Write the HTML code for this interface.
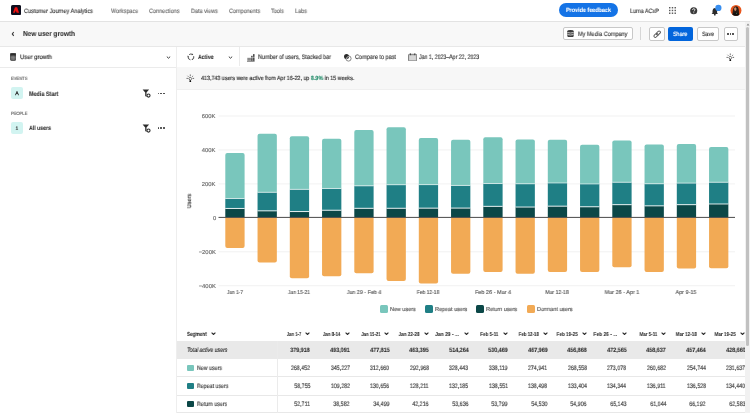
<!DOCTYPE html>
<html><head><meta charset="utf-8"><style>
html,body{margin:0;padding:0;width:750px;height:413px;overflow:hidden;background:#fff;}
body{position:relative;font-family:"Liberation Sans", sans-serif;}
.r{position:absolute;}
.t{position:absolute;white-space:nowrap;font-family:"Liberation Sans", sans-serif;-webkit-text-stroke:0.15px currentColor;will-change:transform;text-rendering:geometricPrecision;}
</style></head><body>
<div class="r" style="left:0px;top:0px;width:750px;height:21px;background:#ffffff;"></div>
<div class="r" style="left:0px;top:20.6px;width:750px;height:1px;background:#e3e3e3;"></div>
<svg class="r" style="left:10.9px;top:5.4px" width="10.1" height="10.1" viewBox="0 0 10 10"><rect width="10" height="10" rx="1.6" fill="#0d0d1d"/><path d="M3.9 2.2H6.1L8 7.8H2z" fill="#f00f0f"/><path d="M3.9 7.9L4.75 5.2 5.6 7.9z" fill="#0d0d1d"/></svg>
<div class="t" style="top:1.70px;line-height:20px;height:20px;font-size:6.283px;color:#3a3a3a;font-weight:400;left:24.00px;transform:scaleX(0.8865);transform-origin:left center;">Customer Journey Analytics</div>
<div class="t" style="top:1.70px;line-height:20px;height:20px;font-size:6.283px;color:#6d6d6d;font-weight:400;left:111.20px;transform:scaleX(0.8754);transform-origin:left center;">Workspace</div>
<div class="t" style="top:1.70px;line-height:20px;height:20px;font-size:6.283px;color:#6d6d6d;font-weight:400;left:149.30px;transform:scaleX(0.8754);transform-origin:left center;">Connections</div>
<div class="t" style="top:1.70px;line-height:20px;height:20px;font-size:6.283px;color:#6d6d6d;font-weight:400;left:190.70px;transform:scaleX(0.8754);transform-origin:left center;">Data views</div>
<div class="t" style="top:1.70px;line-height:20px;height:20px;font-size:6.283px;color:#6d6d6d;font-weight:400;left:228.50px;transform:scaleX(0.8754);transform-origin:left center;">Components</div>
<div class="t" style="top:1.70px;line-height:20px;height:20px;font-size:6.283px;color:#6d6d6d;font-weight:400;left:271.20px;transform:scaleX(0.8754);transform-origin:left center;">Tools</div>
<div class="t" style="top:1.70px;line-height:20px;height:20px;font-size:6.283px;color:#6d6d6d;font-weight:400;left:294.70px;transform:scaleX(0.8754);transform-origin:left center;">Labs</div>
<div class="r" style="left:558.7px;top:3.2px;width:59.1px;height:14px;background:#1473e6;border-radius:7px;"></div>
<div class="t" style="top:1.10px;line-height:20px;height:20px;font-size:6.18px;color:#ffffff;font-weight:700;-webkit-text-stroke:0.07px currentColor;left:566.00px;transform:scaleX(0.8786);transform-origin:left center;">Provide feedback</div>
<div class="t" style="top:1.50px;line-height:20px;height:20px;font-size:6.283px;color:#3a3a3a;font-weight:400;left:630.00px;transform:scaleX(0.8738);transform-origin:left center;">Luma ACxP</div>
<svg class="r" style="left:668.8px;top:6.6px" width="8" height="8" viewBox="0 0 8 8"><rect x="0.00" y="0.00" width="1.45" height="1.45" fill="#5a5a5a"/><rect x="0.00" y="2.75" width="1.45" height="1.45" fill="#5a5a5a"/><rect x="0.00" y="5.50" width="1.45" height="1.45" fill="#5a5a5a"/><rect x="2.75" y="0.00" width="1.45" height="1.45" fill="#5a5a5a"/><rect x="2.75" y="2.75" width="1.45" height="1.45" fill="#5a5a5a"/><rect x="2.75" y="5.50" width="1.45" height="1.45" fill="#5a5a5a"/><rect x="5.50" y="0.00" width="1.45" height="1.45" fill="#5a5a5a"/><rect x="5.50" y="2.75" width="1.45" height="1.45" fill="#5a5a5a"/><rect x="5.50" y="5.50" width="1.45" height="1.45" fill="#5a5a5a"/></svg>
<svg class="r" style="left:690px;top:6.8px" width="8" height="8" viewBox="0 0 8 8"><circle cx="3.7" cy="3.7" r="3.55" fill="#3a3a3a"/><path d="M2.6 2.9q0-1.2 1.15-1.2t1.15 1.1q0 0.55-0.5 0.85t-0.55 0.85" stroke="#fff" stroke-width="0.85" fill="none"/><circle cx="3.8" cy="5.7" r="0.5" fill="#fff"/></svg>
<svg class="r" style="left:710px;top:4px" width="12" height="12" viewBox="0 0 12 12"><path d="M4.8 4.1q-2.2 0.2-2.3 2.6v2.3l-0.9 1h6.4l-0.9-1v-2.3q-0.1-2.4-2.3-2.6z" fill="#2c2c2c"/><circle cx="4.8" cy="10.7" r="0.9" fill="#2c2c2c"/><circle cx="8.4" cy="3.9" r="3.1" fill="#378ef0"/></svg>
<svg class="r" style="left:728px;top:3px" width="16" height="16" viewBox="0 0 16 16"><defs><clipPath id="av"><circle cx="8" cy="7.4" r="5.45"/></clipPath></defs><circle cx="8" cy="7.4" r="5.45" fill="#e9561c"/><g clip-path="url(#av)"><path d="M4.3 13q0.3-7.6 2.2-9.2q1.6-1.2 3.1 0q1.6 1.6 1.6 9.2z" fill="#2a1c17"/><ellipse cx="7.3" cy="6.1" rx="1.2" ry="1.8" fill="#c98f6c"/><path d="M3.6 14q0.6-4.2 4.2-4.4q3.5 0.2 4.2 4.4z" fill="#101010"/><circle cx="8.6" cy="10.3" r="0.5" fill="#6a8a5a"/></g></svg>
<div class="r" style="left:0px;top:21.6px;width:745px;height:25px;background:#f8f8f8;"></div>
<div class="r" style="left:0px;top:46.4px;width:745px;height:0.8px;background:#e8e8e8;"></div>
<svg class="r" style="left:11px;top:31px" width="4" height="6" viewBox="0 0 4 6"><path d="M2.7 1L1.3 2.9l1.4 1.9" stroke="#3a3a3a" stroke-width="1.1" fill="none"/></svg>
<div class="t" style="top:24.10px;line-height:20px;height:20px;font-size:7.21px;color:#2c2c2c;font-weight:700;-webkit-text-stroke:0.07px currentColor;left:23.30px;transform:scaleX(0.8946);transform-origin:left center;">New user growth</div>
<div class="r" style="left:563.4px;top:26.6px;width:69.3px;height:13.6px;background:#ffffff;border:0.8px solid #c8c8c8;border-radius:2px;box-sizing:border-box;"></div>
<svg class="r" style="left:567px;top:29.8px" width="7" height="7.4" viewBox="0 0 7 7.4"><path d="M0.3 1.3Q0.3 0.1 3.5 0.1T6.7 1.3V6.1Q6.7 7.3 3.5 7.3T0.3 6.1z" fill="#3a3a3a"/><path d="M0.5 2.6Q3.5 3.4 6.5 2.6M0.5 4.6Q3.5 5.4 6.5 4.6" stroke="#fff" stroke-width="0.75" fill="none"/></svg>
<div class="t" style="top:24.90px;line-height:20px;height:20px;font-size:6.283px;color:#3a3a3a;font-weight:400;left:578.00px;transform:scaleX(0.8881);transform-origin:left center;">My Media Company</div>
<div class="r" style="left:640px;top:27px;width:0.8px;height:13px;background:#d6d6d6;"></div>
<div class="r" style="left:649.2px;top:26.5px;width:15.4px;height:14.2px;background:#ffffff;border:0.8px solid #c8c8c8;border-radius:2px;box-sizing:border-box;"></div>
<svg class="r" style="left:652.8px;top:29.5px" width="8.4" height="8.4" viewBox="0 0 8.4 8.4"><g transform="rotate(-45 4.2 4.2)" stroke="#5a5a5a" stroke-width="0.95" fill="none"><rect x="0.2" y="2.9" width="4.6" height="2.6" rx="1.3"/><rect x="3.6" y="2.9" width="4.6" height="2.6" rx="1.3"/></g></svg>
<div class="r" style="left:667.9px;top:26.5px;width:25.2px;height:14px;background:#0265dc;border-radius:2px;"></div>
<div class="t" style="top:24.70px;line-height:20px;height:20px;font-size:6.18px;color:#ffffff;font-weight:400;left:673.20px;transform:scaleX(0.8738);transform-origin:left center;">Share</div>
<div class="r" style="left:696.7px;top:26.5px;width:22.8px;height:14px;background:#ffffff;border:0.8px solid #c8c8c8;border-radius:2px;box-sizing:border-box;"></div>
<div class="t" style="top:24.70px;line-height:20px;height:20px;font-size:6.18px;color:#3a3a3a;font-weight:400;left:702.00px;transform:scaleX(0.8511);transform-origin:left center;">Save</div>
<div class="r" style="left:723.5px;top:26.5px;width:14px;height:14px;background:#ffffff;border:0.8px solid #c8c8c8;border-radius:2px;box-sizing:border-box;"></div>
<div class="r" style="left:726.9px;top:33.1px;width:1.8px;height:1.8px;background:#555555;"></div>
<div class="r" style="left:729.55px;top:33.1px;width:1.8px;height:1.8px;background:#555555;"></div>
<div class="r" style="left:732.1999999999999px;top:33.1px;width:1.8px;height:1.8px;background:#555555;"></div>
<div class="r" style="left:0px;top:47.1px;width:176px;height:366px;background:#ffffff;"></div>
<div class="r" style="left:175.7px;top:47.1px;width:0.8px;height:366px;background:#eeeeee;"></div>
<div class="r" style="left:0px;top:66.6px;width:176px;height:0.8px;background:#ebebeb;"></div>
<svg class="r" style="left:9.7px;top:53.2px" width="6.2" height="7.8" viewBox="0 0 6.2 7.8"><rect x="0.4" y="0.4" width="5.4" height="7" rx="1" stroke="#3a3a3a" stroke-width="0.8" fill="#6a6a6a"/><rect x="0.4" y="0.4" width="5.4" height="2.2" fill="#2c2c2c"/><path d="M0.6 4.8h5M3.1 2.6v4.8" stroke="#999" stroke-width="0.5"/></svg>
<div class="t" style="top:48.20px;line-height:20px;height:20px;font-size:6.283px;color:#2c2c2c;font-weight:400;left:19.80px;transform:scaleX(0.9454);transform-origin:left center;">User growth</div>
<svg class="r" style="left:166.1px;top:56.2px" width="5" height="3" viewBox="0 0 5 3"><path d="M0.8 0.6L2.5 2.2 4.2 0.6" stroke="#3a3a3a" stroke-width="1.0" fill="none"/></svg>
<div class="t" style="top:70.10px;line-height:20px;height:20px;font-size:4.738px;color:#505050;font-weight:400;left:10.70px;transform:scaleX(0.8653);transform-origin:left center;-webkit-text-stroke:0.1px #505050;">EVENTS</div>
<div class="r" style="left:10.6px;top:87.1px;width:12.1px;height:12.1px;background:#d2f4f1;border-radius:2px;"></div>
<div class="t" style="top:84.30px;line-height:20px;height:20px;font-size:5.2px;color:#2c2c2c;font-weight:400;left:-83.40px;width:200px;text-align:center;-webkit-text-stroke:0.3px #2c2c2c;">A</div>
<div class="t" style="top:84.60px;line-height:20px;height:20px;font-size:6.386px;color:#2c2c2c;font-weight:700;-webkit-text-stroke:0.07px currentColor;left:28.50px;transform:scaleX(0.8566);transform-origin:left center;">Media Start</div>
<div class="t" style="top:104.60px;line-height:20px;height:20px;font-size:4.738px;color:#505050;font-weight:400;left:10.70px;transform:scaleX(0.8653);transform-origin:left center;-webkit-text-stroke:0.1px #505050;">PEOPLE</div>
<div class="r" style="left:10.6px;top:121.8px;width:12.1px;height:12.1px;background:#d2f4f1;border-radius:2px;"></div>
<div class="t" style="top:118.80px;line-height:20px;height:20px;font-size:5.0px;color:#2c2c2c;font-weight:400;left:-83.40px;width:200px;text-align:center;">1</div>
<div class="t" style="top:119.20px;line-height:20px;height:20px;font-size:6.283px;color:#2c2c2c;font-weight:700;-webkit-text-stroke:0.07px currentColor;left:28.50px;transform:scaleX(0.8292);transform-origin:left center;">All users</div>
<svg class="r" style="left:142px;top:89.40px" width="10" height="10" viewBox="0 0 10 10"><path d="M0.6 0.6H7.1L4.5 3.5V7.9L3.2 7V3.5z" fill="#2c2c2c"/><circle cx="6.5" cy="6.6" r="1.55" stroke="#2c2c2c" stroke-width="1.1" fill="#fff"/></svg>
<div class="r" style="left:157.7px;top:92.9px;width:1.6px;height:1.6px;background:#3a3a3a;border-radius:50%;"></div>
<div class="r" style="left:160.39999999999998px;top:92.9px;width:1.6px;height:1.6px;background:#3a3a3a;border-radius:50%;"></div>
<div class="r" style="left:163.1px;top:92.9px;width:1.6px;height:1.6px;background:#3a3a3a;border-radius:50%;"></div>
<svg class="r" style="left:142px;top:123.90px" width="10" height="10" viewBox="0 0 10 10"><path d="M0.6 0.6H7.1L4.5 3.5V7.9L3.2 7V3.5z" fill="#2c2c2c"/><circle cx="6.5" cy="6.6" r="1.55" stroke="#2c2c2c" stroke-width="1.1" fill="#fff"/></svg>
<div class="r" style="left:157.7px;top:127.39999999999999px;width:1.6px;height:1.6px;background:#3a3a3a;border-radius:50%;"></div>
<div class="r" style="left:160.39999999999998px;top:127.39999999999999px;width:1.6px;height:1.6px;background:#3a3a3a;border-radius:50%;"></div>
<div class="r" style="left:163.1px;top:127.39999999999999px;width:1.6px;height:1.6px;background:#3a3a3a;border-radius:50%;"></div>
<div class="r" style="left:176.8px;top:47.1px;width:568.2px;height:19.5px;background:#ffffff;"></div>
<div class="r" style="left:176.8px;top:66.6px;width:568.2px;height:0.8px;background:#ebebeb;"></div>
<div class="r" style="left:239px;top:47.1px;width:0.8px;height:19.3px;background:#ebebeb;"></div>
<svg class="r" style="left:186.8px;top:53.2px" width="8" height="8" viewBox="0 0 8 8"><g stroke="#3a3a3a" stroke-width="0.9" fill="none"><path d="M2.2 1.6A2.9 2.9 0 0 1 5.4 1.4"/><path d="M6.7 3.2A2.9 2.9 0 0 1 5.3 6.6"/><path d="M3.4 6.8A2.9 2.9 0 0 1 1.1 3.6"/></g><path d="M5 0.6l1.3 1.1-1.5 0.6zM6.4 6.3l-1.6 0.7 0.2-1.6zM0.6 4.2l0.1-1.7 1.3 1z" fill="#3a3a3a"/></svg>
<div class="t" style="top:48.20px;line-height:20px;height:20px;font-size:6.283px;color:#2c2c2c;font-weight:700;-webkit-text-stroke:0.07px currentColor;left:198.00px;transform:scaleX(0.8276);transform-origin:left center;">Active</div>
<svg class="r" style="left:227.8px;top:56px" width="5" height="3" viewBox="0 0 5 3"><path d="M0.8 0.6L2.5 2.2 4.2 0.6" stroke="#3a3a3a" stroke-width="1.0" fill="none"/></svg>
<svg class="r" style="left:246.8px;top:53.5px" width="8" height="8" viewBox="0 0 8 8"><rect x="0" y="6.9" width="7.6" height="0.7" fill="#555"/><rect x="0.3" y="3.8" width="3.6" height="3" fill="#8a8a8a"/><rect x="4.2" y="1.8" width="1.4" height="1.8" fill="#3a3a3a"/><rect x="4.2" y="4.1" width="1.4" height="2.8" fill="#3a3a3a"/><rect x="6.1" y="0.1" width="1.4" height="2.8" fill="#3a3a3a"/><rect x="6.1" y="3.4" width="1.4" height="3.5" fill="#3a3a3a"/></svg>
<div class="t" style="top:48.10px;line-height:20px;height:20px;font-size:6.386px;color:#3a3a3a;font-weight:400;left:258.00px;transform:scaleX(0.8613);transform-origin:left center;">Number of users, Stacked bar</div>
<svg class="r" style="left:343px;top:53px" width="9" height="9" viewBox="0 0 9 9"><circle cx="5.5" cy="5.5" r="2.6" stroke="#6a6a6a" stroke-width="0.8" fill="none"/><circle cx="3.5" cy="3.5" r="2.5" fill="#2c2c2c"/><path d="M3.4 6A2.6 2.6 0 0 1 6 3.4" stroke="#fff" stroke-width="0.6" fill="none"/></svg>
<div class="t" style="top:48.10px;line-height:20px;height:20px;font-size:6.386px;color:#3a3a3a;font-weight:400;left:354.50px;transform:scaleX(0.8722);transform-origin:left center;">Compare to past</div>
<svg class="r" style="left:407.6px;top:52.8px" width="9.2" height="8.6" viewBox="0 0 9.2 8.6"><rect x="0.5" y="1.3" width="8.2" height="6.8" rx="0.8" stroke="#6a6a6a" stroke-width="0.8" fill="#c4c4c4"/><rect x="1.5" y="3" width="6.2" height="4" fill="#d6d6d6"/><path d="M2.4 0.4v1.8M6.8 0.4v1.8" stroke="#3a3a3a" stroke-width="1"/></svg>
<div class="t" style="top:48.10px;line-height:20px;height:20px;font-size:6.386px;color:#3a3a3a;font-weight:400;left:419.00px;transform:scaleX(0.8205);transform-origin:left center;">Jan 1, 2023–Apr 22, 2023</div>
<svg class="r" style="left:724.4px;top:50.6px" width="14" height="14" viewBox="0 0 14 14"><path d="M6.3 2.5v1.4M3.5 3.8l0.9 0.9M9.1 3.8l-0.9 0.9M2.5 6.4h1.4M8.7 6.4h1.4" stroke="#3a3a3a" stroke-width="0.75" fill="none"/><path d="M6.3 4.9l1.5 1.8-1.5 1.9-1.5-1.9z" stroke="#3a3a3a" stroke-width="0.75" fill="none"/><circle cx="6.3" cy="9.2" r="0.9" fill="#111"/></svg>
<div class="r" style="left:176.5px;top:67.3px;width:568.2px;height:22.2px;background:#f7f7f7;"></div>
<div class="r" style="left:176.5px;top:88.5px;width:568.2px;height:1.0px;background:#efefef;"></div>
<svg class="r" style="left:184px;top:72px" width="14" height="14" viewBox="0 0 14 14"><path d="M6.3 2.5v1.4M3.5 3.8l0.9 0.9M9.1 3.8l-0.9 0.9M2.5 6.4h1.4M8.7 6.4h1.4" stroke="#3a3a3a" stroke-width="0.75" fill="none"/><path d="M6.3 4.9l1.5 1.8-1.5 1.9-1.5-1.9z" stroke="#3a3a3a" stroke-width="0.75" fill="none"/><circle cx="6.3" cy="9.2" r="0.9" fill="#111"/></svg>
<div class="t" style="left:201.1px;top:69.3px;line-height:20px;height:20px;font-size:6.0px;color:#2c2c2c;transform:scaleX(0.893);transform-origin:left center;">413,743 users were active from Apr 16-22, up <b style="color:#268e6c">8.9%</b> in 15 weeks.</div>
<div class="r" style="left:176.8px;top:89.5px;width:568.2px;height:323.5px;background:#ffffff;"></div>
<svg class="r" style="left:0;top:0" width="750" height="413" viewBox="0 0 750 413"><rect x="218.5" y="115.55" width="516.5" height="0.9" fill="#f0f0f0"/><rect x="218.5" y="149.50" width="516.5" height="0.9" fill="#f0f0f0"/><rect x="218.5" y="183.45" width="516.5" height="0.9" fill="#f0f0f0"/><rect x="218.5" y="251.35" width="516.5" height="0.9" fill="#f0f0f0"/><rect x="218.5" y="285.30" width="516.5" height="0.9" fill="#f0f0f0"/><rect x="225.30" y="208.45" width="19.3" height="8.95" fill="#0b4747"/><rect x="225.30" y="198.48" width="19.3" height="9.97" fill="#1f7f85"/><path d="M225.30 198.48V154.91q0-2 2-2h15.30q2 0 2 2V198.48z" fill="#79c6bc"/><rect x="225.30" y="207.95" width="19.3" height="1" fill="#ffffff" opacity="0.85"/><rect x="225.30" y="197.98" width="19.3" height="1" fill="#ffffff" opacity="0.6"/><path d="M225.30 217.40V245.96q0 2 2 2h15.30q2 0 2-2V217.40z" fill="#f2aa55"/><rect x="257.55" y="210.85" width="19.3" height="6.55" fill="#0b4747"/><rect x="257.55" y="192.30" width="19.3" height="18.55" fill="#1f7f85"/><path d="M257.55 192.30V135.70q0-2 2-2h15.30q2 0 2 2V192.30z" fill="#79c6bc"/><rect x="257.55" y="210.35" width="19.3" height="1" fill="#ffffff" opacity="0.85"/><rect x="257.55" y="191.80" width="19.3" height="1" fill="#ffffff" opacity="0.6"/><path d="M257.55 217.40V260.55q0 2 2 2h15.30q2 0 2-2V217.40z" fill="#f2aa55"/><rect x="289.80" y="211.54" width="19.3" height="5.86" fill="#0b4747"/><rect x="289.80" y="189.36" width="19.3" height="22.18" fill="#1f7f85"/><path d="M289.80 189.36V138.29q0-2 2-2h15.30q2 0 2 2V189.36z" fill="#79c6bc"/><rect x="289.80" y="211.04" width="19.3" height="1" fill="#ffffff" opacity="0.85"/><rect x="289.80" y="188.86" width="19.3" height="1" fill="#ffffff" opacity="0.6"/><path d="M289.80 217.40V276.34q0 2 2 2h15.30q2 0 2-2V217.40z" fill="#f2aa55"/><rect x="322.05" y="210.23" width="19.3" height="7.17" fill="#0b4747"/><rect x="322.05" y="188.47" width="19.3" height="21.76" fill="#1f7f85"/><path d="M322.05 188.47V140.74q0-2 2-2h15.30q2 0 2 2V188.47z" fill="#79c6bc"/><rect x="322.05" y="209.73" width="19.3" height="1" fill="#ffffff" opacity="0.85"/><rect x="322.05" y="187.97" width="19.3" height="1" fill="#ffffff" opacity="0.6"/><path d="M322.05 217.40V274.13q0 2 2 2h15.30q2 0 2-2V217.40z" fill="#f2aa55"/><rect x="354.30" y="208.30" width="19.3" height="9.10" fill="#0b4747"/><rect x="354.30" y="185.86" width="19.3" height="22.44" fill="#1f7f85"/><path d="M354.30 185.86V132.10q0-2 2-2h15.30q2 0 2 2V185.86z" fill="#79c6bc"/><rect x="354.30" y="207.80" width="19.3" height="1" fill="#ffffff" opacity="0.85"/><rect x="354.30" y="185.36" width="19.3" height="1" fill="#ffffff" opacity="0.6"/><path d="M354.30 217.40V271.25q0 2 2 2h15.30q2 0 2-2V217.40z" fill="#f2aa55"/><rect x="386.55" y="208.27" width="19.3" height="9.13" fill="#0b4747"/><rect x="386.55" y="184.75" width="19.3" height="23.52" fill="#1f7f85"/><path d="M386.55 184.75V129.35q0-2 2-2h15.30q2 0 2 2V184.75z" fill="#79c6bc"/><rect x="386.55" y="207.77" width="19.3" height="1" fill="#ffffff" opacity="0.85"/><rect x="386.55" y="184.25" width="19.3" height="1" fill="#ffffff" opacity="0.6"/><path d="M386.55 217.40V278.89q0 2 2 2h15.30q2 0 2-2V217.40z" fill="#f2aa55"/><rect x="418.80" y="208.14" width="19.3" height="9.26" fill="#0b4747"/><rect x="418.80" y="184.63" width="19.3" height="23.51" fill="#1f7f85"/><path d="M418.80 184.63V139.96q0-2 2-2h15.30q2 0 2 2V184.63z" fill="#79c6bc"/><rect x="418.80" y="207.64" width="19.3" height="1" fill="#ffffff" opacity="0.85"/><rect x="418.80" y="184.13" width="19.3" height="1" fill="#ffffff" opacity="0.6"/><path d="M418.80 217.40V281.60q0 2 2 2h15.30q2 0 2-2V217.40z" fill="#f2aa55"/><rect x="451.05" y="208.08" width="19.3" height="9.32" fill="#0b4747"/><rect x="451.05" y="185.43" width="19.3" height="22.65" fill="#1f7f85"/><path d="M451.05 185.43V141.85q0-2 2-2h15.30q2 0 2 2V185.43z" fill="#79c6bc"/><rect x="451.05" y="207.58" width="19.3" height="1" fill="#ffffff" opacity="0.85"/><rect x="451.05" y="184.93" width="19.3" height="1" fill="#ffffff" opacity="0.6"/><path d="M451.05 217.40V271.76q0 2 2 2h15.30q2 0 2-2V217.40z" fill="#f2aa55"/><rect x="483.30" y="206.34" width="19.3" height="11.06" fill="#0b4747"/><rect x="483.30" y="183.54" width="19.3" height="22.80" fill="#1f7f85"/><path d="M483.30 183.54V139.18q0-2 2-2h15.30q2 0 2 2V183.54z" fill="#79c6bc"/><rect x="483.30" y="205.84" width="19.3" height="1" fill="#ffffff" opacity="0.85"/><rect x="483.30" y="183.04" width="19.3" height="1" fill="#ffffff" opacity="0.6"/><path d="M483.30 217.40V269.89q0 2 2 2h15.30q2 0 2-2V217.40z" fill="#f2aa55"/><rect x="515.55" y="207.04" width="19.3" height="10.36" fill="#0b4747"/><rect x="515.55" y="183.80" width="19.3" height="23.24" fill="#1f7f85"/><path d="M515.55 183.80V141.55q0-2 2-2h15.30q2 0 2 2V183.80z" fill="#79c6bc"/><rect x="515.55" y="206.54" width="19.3" height="1" fill="#ffffff" opacity="0.85"/><rect x="515.55" y="183.30" width="19.3" height="1" fill="#ffffff" opacity="0.6"/><path d="M515.55 217.40V271.76q0 2 2 2h15.30q2 0 2-2V217.40z" fill="#f2aa55"/><rect x="547.80" y="206.16" width="19.3" height="11.24" fill="#0b4747"/><rect x="547.80" y="182.99" width="19.3" height="23.18" fill="#1f7f85"/><path d="M547.80 182.99V141.75q0-2 2-2h15.30q2 0 2 2V182.99z" fill="#79c6bc"/><rect x="547.80" y="205.66" width="19.3" height="1" fill="#ffffff" opacity="0.85"/><rect x="547.80" y="182.49" width="19.3" height="1" fill="#ffffff" opacity="0.6"/><path d="M547.80 217.40V269.89q0 2 2 2h15.30q2 0 2-2V217.40z" fill="#f2aa55"/><rect x="580.05" y="206.78" width="19.3" height="10.62" fill="#0b4747"/><rect x="580.05" y="183.96" width="19.3" height="22.82" fill="#1f7f85"/><path d="M580.05 183.96V146.63q0-2 2-2h15.30q2 0 2 2V183.96z" fill="#79c6bc"/><rect x="580.05" y="206.28" width="19.3" height="1" fill="#ffffff" opacity="0.85"/><rect x="580.05" y="183.46" width="19.3" height="1" fill="#ffffff" opacity="0.6"/><path d="M580.05 217.40V269.89q0 2 2 2h15.30q2 0 2-2V217.40z" fill="#f2aa55"/><rect x="612.30" y="204.67" width="19.3" height="12.73" fill="#0b4747"/><rect x="612.30" y="182.26" width="19.3" height="22.41" fill="#1f7f85"/><path d="M612.30 182.26V142.50q0-2 2-2h15.30q2 0 2 2V182.26z" fill="#79c6bc"/><rect x="612.30" y="204.17" width="19.3" height="1" fill="#ffffff" opacity="0.85"/><rect x="612.30" y="181.76" width="19.3" height="1" fill="#ffffff" opacity="0.6"/><path d="M612.30 217.40V265.31q0 2 2 2h15.30q2 0 2-2V217.40z" fill="#f2aa55"/><rect x="644.55" y="205.86" width="19.3" height="11.54" fill="#0b4747"/><rect x="644.55" y="183.79" width="19.3" height="22.07" fill="#1f7f85"/><path d="M644.55 183.79V146.58q0-2 2-2h15.30q2 0 2 2V183.79z" fill="#79c6bc"/><rect x="644.55" y="205.36" width="19.3" height="1" fill="#ffffff" opacity="0.85"/><rect x="644.55" y="183.29" width="19.3" height="1" fill="#ffffff" opacity="0.6"/><path d="M644.55 217.40V269.89q0 2 2 2h15.30q2 0 2-2V217.40z" fill="#f2aa55"/><rect x="676.80" y="204.67" width="19.3" height="12.73" fill="#0b4747"/><rect x="676.80" y="183.11" width="19.3" height="21.56" fill="#1f7f85"/><path d="M676.80 183.11V145.90q0-2 2-2h15.30q2 0 2 2V183.11z" fill="#79c6bc"/><rect x="676.80" y="204.17" width="19.3" height="1" fill="#ffffff" opacity="0.85"/><rect x="676.80" y="182.61" width="19.3" height="1" fill="#ffffff" opacity="0.6"/><path d="M676.80 217.40V266.49q0 2 2 2h15.30q2 0 2-2V217.40z" fill="#f2aa55"/><rect x="709.05" y="203.99" width="19.3" height="13.41" fill="#0b4747"/><rect x="709.05" y="182.26" width="19.3" height="21.73" fill="#1f7f85"/><path d="M709.05 182.26V148.95q0-2 2-2h15.30q2 0 2 2V182.26z" fill="#79c6bc"/><rect x="709.05" y="203.49" width="19.3" height="1" fill="#ffffff" opacity="0.85"/><rect x="709.05" y="181.76" width="19.3" height="1" fill="#ffffff" opacity="0.6"/><path d="M709.05 217.40V266.16q0 2 2 2h15.30q2 0 2-2V217.40z" fill="#f2aa55"/><rect x="218.5" y="216.90" width="516.5" height="1" fill="#4b4b4b"/></svg>
<div class="t" style="top:107.25px;line-height:20px;height:20px;font-size:5.768px;color:#6a6a6a;font-weight:400;right:534.30px;text-align:right;transform:scaleX(1.0177);transform-origin:right center;">600K</div>
<div class="t" style="top:141.20px;line-height:20px;height:20px;font-size:5.768px;color:#6a6a6a;font-weight:400;right:534.30px;text-align:right;transform:scaleX(1.0177);transform-origin:right center;">400K</div>
<div class="t" style="top:175.15px;line-height:20px;height:20px;font-size:5.768px;color:#6a6a6a;font-weight:400;right:534.30px;text-align:right;transform:scaleX(1.0177);transform-origin:right center;">200K</div>
<div class="t" style="top:209.10px;line-height:20px;height:20px;font-size:5.768px;color:#6a6a6a;font-weight:400;right:534.30px;text-align:right;transform:scaleX(1.0177);transform-origin:right center;">0</div>
<div class="t" style="top:243.05px;line-height:20px;height:20px;font-size:5.768px;color:#6a6a6a;font-weight:400;right:534.30px;text-align:right;transform:scaleX(1.0177);transform-origin:right center;">&minus;200K</div>
<div class="t" style="top:277.00px;line-height:20px;height:20px;font-size:5.768px;color:#6a6a6a;font-weight:400;right:534.30px;text-align:right;transform:scaleX(1.0177);transform-origin:right center;">&minus;400K</div>
<div class="t" style="top:190.60px;line-height:20px;height:20px;font-size:5.9px;color:#333333;font-weight:400;left:90.20px;width:200px;text-align:center;transform:rotate(-90deg) scaleX(0.922);">Users</div>
<div class="t" style="top:282.70px;line-height:20px;height:20px;font-size:5.6px;color:#606060;font-weight:400;left:134.95px;width:200px;text-align:center;transform:scaleX(0.8619);transform-origin:center center;">Jan 1-7</div>
<div class="t" style="top:282.70px;line-height:20px;height:20px;font-size:5.6px;color:#606060;font-weight:400;left:199.45px;width:200px;text-align:center;transform:scaleX(0.8752);transform-origin:center center;">Jan 15-21</div>
<div class="t" style="top:282.70px;line-height:20px;height:20px;font-size:5.6px;color:#606060;font-weight:400;left:263.95px;width:200px;text-align:center;transform:scaleX(0.9582);transform-origin:center center;">Jan 29 - Feb 4</div>
<div class="t" style="top:282.70px;line-height:20px;height:20px;font-size:5.6px;color:#606060;font-weight:400;left:328.45px;width:200px;text-align:center;transform:scaleX(0.8775);transform-origin:center center;">Feb 12-18</div>
<div class="t" style="top:282.70px;line-height:20px;height:20px;font-size:5.6px;color:#606060;font-weight:400;left:392.95px;width:200px;text-align:center;transform:scaleX(0.9857);transform-origin:center center;">Feb 26 - Mar 4</div>
<div class="t" style="top:282.70px;line-height:20px;height:20px;font-size:5.6px;color:#606060;font-weight:400;left:457.45px;width:200px;text-align:center;transform:scaleX(0.9168);transform-origin:center center;">Mar 12-18</div>
<div class="t" style="top:282.70px;line-height:20px;height:20px;font-size:5.6px;color:#606060;font-weight:400;left:521.95px;width:200px;text-align:center;transform:scaleX(0.9752);transform-origin:center center;">Mar 26 - Apr 1</div>
<div class="t" style="top:282.70px;line-height:20px;height:20px;font-size:5.6px;color:#606060;font-weight:400;left:586.45px;width:200px;text-align:center;transform:scaleX(0.9684);transform-origin:center center;">Apr 9-15</div>
<div class="r" style="left:380px;top:305.3px;width:7.8px;height:7.8px;background:#79c6bc;border-radius:1.5px;"></div>
<div class="t" style="top:300.20px;line-height:20px;height:20px;font-size:5.768px;color:#585858;font-weight:400;left:390.00px;transform:scaleX(0.9431);transform-origin:left center;">New users</div>
<div class="r" style="left:425.4px;top:305.3px;width:7.8px;height:7.8px;background:#1f7f85;border-radius:1.5px;"></div>
<div class="t" style="top:300.20px;line-height:20px;height:20px;font-size:5.768px;color:#585858;font-weight:400;left:435.40px;transform:scaleX(0.9431);transform-origin:left center;">Repeat users</div>
<div class="r" style="left:476.4px;top:305.3px;width:7.8px;height:7.8px;background:#0b4747;border-radius:1.5px;"></div>
<div class="t" style="top:300.20px;line-height:20px;height:20px;font-size:5.768px;color:#585858;font-weight:400;left:486.40px;transform:scaleX(0.9431);transform-origin:left center;">Return users</div>
<div class="r" style="left:527.1px;top:305.3px;width:7.8px;height:7.8px;background:#f2aa55;border-radius:1.5px;"></div>
<div class="t" style="top:300.20px;line-height:20px;height:20px;font-size:5.768px;color:#585858;font-weight:400;left:537.10px;transform:scaleX(0.9431);transform-origin:left center;">Dormant users</div>
<div class="t" style="top:324.60px;line-height:20px;height:20px;font-size:5.974px;color:#2c2c2c;font-weight:700;-webkit-text-stroke:0.07px currentColor;left:186.70px;transform:scaleX(0.7800);transform-origin:left center;">Segment</div>
<svg class="r" style="left:211px;top:331.7px" width="5" height="3.4" viewBox="0 0 5 3.4"><path d="M0.6 0.7L2.5 2.5 4.4 0.7" stroke="#2c2c2c" stroke-width="1.15" fill="none"/></svg>
<div class="r" style="left:176.8px;top:340.7px;width:568.2px;height:18px;background:#e9e9e9;"></div>
<div class="r" style="left:176.8px;top:376.2px;width:568.2px;height:0.8px;background:#e8e8e8;"></div>
<div class="r" style="left:176.8px;top:394.7px;width:568.2px;height:0.8px;background:#e8e8e8;"></div>
<div class="r" style="left:176.8px;top:411.8px;width:568.2px;height:0.8px;background:#e8e8e8;"></div>
<div class="r" style="left:277.2px;top:340.7px;width:0.8px;height:73px;background:#ebebeb;"></div>
<svg class="r" style="left:305.3px;top:331.7px" width="5" height="3.4" viewBox="0 0 5 3.4"><path d="M0.6 0.7L2.5 2.5 4.4 0.7" stroke="#2c2c2c" stroke-width="1.15" fill="none"/></svg>
<div class="t" style="top:324.60px;line-height:20px;height:20px;font-size:5.6px;color:#2c2c2c;font-weight:700;-webkit-text-stroke:0.07px currentColor;right:448.90px;text-align:right;transform:scaleX(0.7513);transform-origin:right center;">Jan 1-7</div>
<div class="t" style="top:341.10px;line-height:20px;height:20px;font-size:6.283px;color:#2c2c2c;font-weight:700;-webkit-text-stroke:0.07px currentColor;right:439.90px;text-align:right;transform:scaleX(0.8595);transform-origin:right center;">379,918</div>
<div class="t" style="top:359.30px;line-height:20px;height:20px;font-size:6.386px;color:#3a3a3a;font-weight:400;right:439.90px;text-align:right;transform:scaleX(0.8299);transform-origin:right center;">268,452</div>
<div class="t" style="top:377.30px;line-height:20px;height:20px;font-size:6.386px;color:#3a3a3a;font-weight:400;right:439.90px;text-align:right;transform:scaleX(0.8299);transform-origin:right center;">58,755</div>
<div class="t" style="top:395.30px;line-height:20px;height:20px;font-size:6.386px;color:#3a3a3a;font-weight:400;right:439.90px;text-align:right;transform:scaleX(0.8299);transform-origin:right center;">52,711</div>
<svg class="r" style="left:344.85px;top:331.7px" width="5" height="3.4" viewBox="0 0 5 3.4"><path d="M0.6 0.7L2.5 2.5 4.4 0.7" stroke="#2c2c2c" stroke-width="1.15" fill="none"/></svg>
<div class="t" style="top:324.60px;line-height:20px;height:20px;font-size:5.6px;color:#2c2c2c;font-weight:700;-webkit-text-stroke:0.07px currentColor;right:409.35px;text-align:right;transform:scaleX(0.7808);transform-origin:right center;">Jan 8-14</div>
<div class="t" style="top:341.10px;line-height:20px;height:20px;font-size:6.283px;color:#2c2c2c;font-weight:700;-webkit-text-stroke:0.07px currentColor;right:400.35px;text-align:right;transform:scaleX(0.8595);transform-origin:right center;">493,091</div>
<div class="t" style="top:359.30px;line-height:20px;height:20px;font-size:6.386px;color:#3a3a3a;font-weight:400;right:400.35px;text-align:right;transform:scaleX(0.8299);transform-origin:right center;">345,227</div>
<div class="t" style="top:377.30px;line-height:20px;height:20px;font-size:6.386px;color:#3a3a3a;font-weight:400;right:400.35px;text-align:right;transform:scaleX(0.8299);transform-origin:right center;">109,282</div>
<div class="t" style="top:395.30px;line-height:20px;height:20px;font-size:6.386px;color:#3a3a3a;font-weight:400;right:400.35px;text-align:right;transform:scaleX(0.8299);transform-origin:right center;">38,582</div>
<svg class="r" style="left:384.40000000000003px;top:331.7px" width="5" height="3.4" viewBox="0 0 5 3.4"><path d="M0.6 0.7L2.5 2.5 4.4 0.7" stroke="#2c2c2c" stroke-width="1.15" fill="none"/></svg>
<div class="t" style="top:324.60px;line-height:20px;height:20px;font-size:5.6px;color:#2c2c2c;font-weight:700;-webkit-text-stroke:0.07px currentColor;right:369.80px;text-align:right;transform:scaleX(0.7521);transform-origin:right center;">Jan 15-21</div>
<div class="t" style="top:341.10px;line-height:20px;height:20px;font-size:6.283px;color:#2c2c2c;font-weight:700;-webkit-text-stroke:0.07px currentColor;right:360.80px;text-align:right;transform:scaleX(0.8595);transform-origin:right center;">477,815</div>
<div class="t" style="top:359.30px;line-height:20px;height:20px;font-size:6.386px;color:#3a3a3a;font-weight:400;right:360.80px;text-align:right;transform:scaleX(0.8299);transform-origin:right center;">312,660</div>
<div class="t" style="top:377.30px;line-height:20px;height:20px;font-size:6.386px;color:#3a3a3a;font-weight:400;right:360.80px;text-align:right;transform:scaleX(0.8299);transform-origin:right center;">130,656</div>
<div class="t" style="top:395.30px;line-height:20px;height:20px;font-size:6.386px;color:#3a3a3a;font-weight:400;right:360.80px;text-align:right;transform:scaleX(0.8299);transform-origin:right center;">34,499</div>
<svg class="r" style="left:423.95px;top:331.7px" width="5" height="3.4" viewBox="0 0 5 3.4"><path d="M0.6 0.7L2.5 2.5 4.4 0.7" stroke="#2c2c2c" stroke-width="1.15" fill="none"/></svg>
<div class="t" style="top:324.60px;line-height:20px;height:20px;font-size:5.6px;color:#2c2c2c;font-weight:700;-webkit-text-stroke:0.07px currentColor;right:330.25px;text-align:right;transform:scaleX(0.8187);transform-origin:right center;">Jan 22-28</div>
<div class="t" style="top:341.10px;line-height:20px;height:20px;font-size:6.283px;color:#2c2c2c;font-weight:700;-webkit-text-stroke:0.07px currentColor;right:321.25px;text-align:right;transform:scaleX(0.8595);transform-origin:right center;">463,395</div>
<div class="t" style="top:359.30px;line-height:20px;height:20px;font-size:6.386px;color:#3a3a3a;font-weight:400;right:321.25px;text-align:right;transform:scaleX(0.8299);transform-origin:right center;">292,968</div>
<div class="t" style="top:377.30px;line-height:20px;height:20px;font-size:6.386px;color:#3a3a3a;font-weight:400;right:321.25px;text-align:right;transform:scaleX(0.8299);transform-origin:right center;">128,211</div>
<div class="t" style="top:395.30px;line-height:20px;height:20px;font-size:6.386px;color:#3a3a3a;font-weight:400;right:321.25px;text-align:right;transform:scaleX(0.8299);transform-origin:right center;">42,216</div>
<svg class="r" style="left:463.5px;top:331.7px" width="5" height="3.4" viewBox="0 0 5 3.4"><path d="M0.6 0.7L2.5 2.5 4.4 0.7" stroke="#2c2c2c" stroke-width="1.15" fill="none"/></svg>
<div class="t" style="top:324.60px;line-height:20px;height:20px;font-size:5.6px;color:#2c2c2c;font-weight:700;-webkit-text-stroke:0.07px currentColor;right:290.70px;text-align:right;transform:scaleX(0.8826);transform-origin:right center;">Jan 29 - ...</div>
<div class="t" style="top:341.10px;line-height:20px;height:20px;font-size:6.283px;color:#2c2c2c;font-weight:700;-webkit-text-stroke:0.07px currentColor;right:281.70px;text-align:right;transform:scaleX(0.8595);transform-origin:right center;">514,264</div>
<div class="t" style="top:359.30px;line-height:20px;height:20px;font-size:6.386px;color:#3a3a3a;font-weight:400;right:281.70px;text-align:right;transform:scaleX(0.8299);transform-origin:right center;">328,443</div>
<div class="t" style="top:377.30px;line-height:20px;height:20px;font-size:6.386px;color:#3a3a3a;font-weight:400;right:281.70px;text-align:right;transform:scaleX(0.8299);transform-origin:right center;">132,185</div>
<div class="t" style="top:395.30px;line-height:20px;height:20px;font-size:6.386px;color:#3a3a3a;font-weight:400;right:281.70px;text-align:right;transform:scaleX(0.8299);transform-origin:right center;">53,636</div>
<svg class="r" style="left:503.05px;top:331.7px" width="5" height="3.4" viewBox="0 0 5 3.4"><path d="M0.6 0.7L2.5 2.5 4.4 0.7" stroke="#2c2c2c" stroke-width="1.15" fill="none"/></svg>
<div class="t" style="top:324.60px;line-height:20px;height:20px;font-size:5.6px;color:#2c2c2c;font-weight:700;-webkit-text-stroke:0.07px currentColor;right:251.15px;text-align:right;transform:scaleX(0.8121);transform-origin:right center;">Feb 5-11</div>
<div class="t" style="top:341.10px;line-height:20px;height:20px;font-size:6.283px;color:#2c2c2c;font-weight:700;-webkit-text-stroke:0.07px currentColor;right:242.15px;text-align:right;transform:scaleX(0.8595);transform-origin:right center;">530,469</div>
<div class="t" style="top:359.30px;line-height:20px;height:20px;font-size:6.386px;color:#3a3a3a;font-weight:400;right:242.15px;text-align:right;transform:scaleX(0.8299);transform-origin:right center;">338,119</div>
<div class="t" style="top:377.30px;line-height:20px;height:20px;font-size:6.386px;color:#3a3a3a;font-weight:400;right:242.15px;text-align:right;transform:scaleX(0.8299);transform-origin:right center;">138,551</div>
<div class="t" style="top:395.30px;line-height:20px;height:20px;font-size:6.386px;color:#3a3a3a;font-weight:400;right:242.15px;text-align:right;transform:scaleX(0.8299);transform-origin:right center;">53,799</div>
<svg class="r" style="left:542.6px;top:331.7px" width="5" height="3.4" viewBox="0 0 5 3.4"><path d="M0.6 0.7L2.5 2.5 4.4 0.7" stroke="#2c2c2c" stroke-width="1.15" fill="none"/></svg>
<div class="t" style="top:324.60px;line-height:20px;height:20px;font-size:5.6px;color:#2c2c2c;font-weight:700;-webkit-text-stroke:0.07px currentColor;right:211.60px;text-align:right;transform:scaleX(0.7819);transform-origin:right center;">Feb 12-18</div>
<div class="t" style="top:341.10px;line-height:20px;height:20px;font-size:6.283px;color:#2c2c2c;font-weight:700;-webkit-text-stroke:0.07px currentColor;right:202.60px;text-align:right;transform:scaleX(0.8595);transform-origin:right center;">467,969</div>
<div class="t" style="top:359.30px;line-height:20px;height:20px;font-size:6.386px;color:#3a3a3a;font-weight:400;right:202.60px;text-align:right;transform:scaleX(0.8299);transform-origin:right center;">274,941</div>
<div class="t" style="top:377.30px;line-height:20px;height:20px;font-size:6.386px;color:#3a3a3a;font-weight:400;right:202.60px;text-align:right;transform:scaleX(0.8299);transform-origin:right center;">138,498</div>
<div class="t" style="top:395.30px;line-height:20px;height:20px;font-size:6.386px;color:#3a3a3a;font-weight:400;right:202.60px;text-align:right;transform:scaleX(0.8299);transform-origin:right center;">54,530</div>
<svg class="r" style="left:582.1500000000001px;top:331.7px" width="5" height="3.4" viewBox="0 0 5 3.4"><path d="M0.6 0.7L2.5 2.5 4.4 0.7" stroke="#2c2c2c" stroke-width="1.15" fill="none"/></svg>
<div class="t" style="top:324.60px;line-height:20px;height:20px;font-size:5.6px;color:#2c2c2c;font-weight:700;-webkit-text-stroke:0.07px currentColor;right:172.05px;text-align:right;transform:scaleX(0.8245);transform-origin:right center;">Feb 19-25</div>
<div class="t" style="top:341.10px;line-height:20px;height:20px;font-size:6.283px;color:#2c2c2c;font-weight:700;-webkit-text-stroke:0.07px currentColor;right:163.05px;text-align:right;transform:scaleX(0.8595);transform-origin:right center;">456,868</div>
<div class="t" style="top:359.30px;line-height:20px;height:20px;font-size:6.386px;color:#3a3a3a;font-weight:400;right:163.05px;text-align:right;transform:scaleX(0.8299);transform-origin:right center;">268,558</div>
<div class="t" style="top:377.30px;line-height:20px;height:20px;font-size:6.386px;color:#3a3a3a;font-weight:400;right:163.05px;text-align:right;transform:scaleX(0.8299);transform-origin:right center;">133,404</div>
<div class="t" style="top:395.30px;line-height:20px;height:20px;font-size:6.386px;color:#3a3a3a;font-weight:400;right:163.05px;text-align:right;transform:scaleX(0.8299);transform-origin:right center;">54,906</div>
<svg class="r" style="left:621.7px;top:331.7px" width="5" height="3.4" viewBox="0 0 5 3.4"><path d="M0.6 0.7L2.5 2.5 4.4 0.7" stroke="#2c2c2c" stroke-width="1.15" fill="none"/></svg>
<div class="t" style="top:324.60px;line-height:20px;height:20px;font-size:5.6px;color:#2c2c2c;font-weight:700;-webkit-text-stroke:0.07px currentColor;right:132.50px;text-align:right;transform:scaleX(0.8764);transform-origin:right center;">Feb 26 - ...</div>
<div class="t" style="top:341.10px;line-height:20px;height:20px;font-size:6.283px;color:#2c2c2c;font-weight:700;-webkit-text-stroke:0.07px currentColor;right:123.50px;text-align:right;transform:scaleX(0.8595);transform-origin:right center;">472,565</div>
<div class="t" style="top:359.30px;line-height:20px;height:20px;font-size:6.386px;color:#3a3a3a;font-weight:400;right:123.50px;text-align:right;transform:scaleX(0.8299);transform-origin:right center;">273,078</div>
<div class="t" style="top:377.30px;line-height:20px;height:20px;font-size:6.386px;color:#3a3a3a;font-weight:400;right:123.50px;text-align:right;transform:scaleX(0.8299);transform-origin:right center;">134,344</div>
<div class="t" style="top:395.30px;line-height:20px;height:20px;font-size:6.386px;color:#3a3a3a;font-weight:400;right:123.50px;text-align:right;transform:scaleX(0.8299);transform-origin:right center;">65,143</div>
<svg class="r" style="left:661.25px;top:331.7px" width="5" height="3.4" viewBox="0 0 5 3.4"><path d="M0.6 0.7L2.5 2.5 4.4 0.7" stroke="#2c2c2c" stroke-width="1.15" fill="none"/></svg>
<div class="t" style="top:324.60px;line-height:20px;height:20px;font-size:5.6px;color:#2c2c2c;font-weight:700;-webkit-text-stroke:0.07px currentColor;right:92.95px;text-align:right;transform:scaleX(0.7986);transform-origin:right center;">Mar 5-11</div>
<div class="t" style="top:341.10px;line-height:20px;height:20px;font-size:6.283px;color:#2c2c2c;font-weight:700;-webkit-text-stroke:0.07px currentColor;right:83.95px;text-align:right;transform:scaleX(0.8595);transform-origin:right center;">458,637</div>
<div class="t" style="top:359.30px;line-height:20px;height:20px;font-size:6.386px;color:#3a3a3a;font-weight:400;right:83.95px;text-align:right;transform:scaleX(0.8299);transform-origin:right center;">260,682</div>
<div class="t" style="top:377.30px;line-height:20px;height:20px;font-size:6.386px;color:#3a3a3a;font-weight:400;right:83.95px;text-align:right;transform:scaleX(0.8299);transform-origin:right center;">136,911</div>
<div class="t" style="top:395.30px;line-height:20px;height:20px;font-size:6.386px;color:#3a3a3a;font-weight:400;right:83.95px;text-align:right;transform:scaleX(0.8299);transform-origin:right center;">61,044</div>
<svg class="r" style="left:700.8000000000001px;top:331.7px" width="5" height="3.4" viewBox="0 0 5 3.4"><path d="M0.6 0.7L2.5 2.5 4.4 0.7" stroke="#2c2c2c" stroke-width="1.15" fill="none"/></svg>
<div class="t" style="top:324.60px;line-height:20px;height:20px;font-size:5.6px;color:#2c2c2c;font-weight:700;-webkit-text-stroke:0.07px currentColor;right:53.40px;text-align:right;transform:scaleX(0.8166);transform-origin:right center;">Mar 12-18</div>
<div class="t" style="top:341.10px;line-height:20px;height:20px;font-size:6.283px;color:#2c2c2c;font-weight:700;-webkit-text-stroke:0.07px currentColor;right:44.40px;text-align:right;transform:scaleX(0.8595);transform-origin:right center;">457,464</div>
<div class="t" style="top:359.30px;line-height:20px;height:20px;font-size:6.386px;color:#3a3a3a;font-weight:400;right:44.40px;text-align:right;transform:scaleX(0.8299);transform-origin:right center;">254,744</div>
<div class="t" style="top:377.30px;line-height:20px;height:20px;font-size:6.386px;color:#3a3a3a;font-weight:400;right:44.40px;text-align:right;transform:scaleX(0.8299);transform-origin:right center;">136,528</div>
<div class="t" style="top:395.30px;line-height:20px;height:20px;font-size:6.386px;color:#3a3a3a;font-weight:400;right:44.40px;text-align:right;transform:scaleX(0.8299);transform-origin:right center;">66,192</div>
<svg class="r" style="left:740.35px;top:331.7px" width="5" height="3.4" viewBox="0 0 5 3.4"><path d="M0.6 0.7L2.5 2.5 4.4 0.7" stroke="#2c2c2c" stroke-width="1.15" fill="none"/></svg>
<div class="t" style="top:324.60px;line-height:20px;height:20px;font-size:5.6px;color:#2c2c2c;font-weight:700;-webkit-text-stroke:0.07px currentColor;right:13.85px;text-align:right;transform:scaleX(0.8244);transform-origin:right center;">Mar 19-25</div>
<div class="t" style="top:341.10px;line-height:20px;height:20px;font-size:6.283px;color:#2c2c2c;font-weight:700;-webkit-text-stroke:0.07px currentColor;right:4.85px;text-align:right;transform:scaleX(0.8595);transform-origin:right center;">428,660</div>
<div class="t" style="top:359.30px;line-height:20px;height:20px;font-size:6.386px;color:#3a3a3a;font-weight:400;right:4.85px;text-align:right;transform:scaleX(0.8299);transform-origin:right center;">231,637</div>
<div class="t" style="top:377.30px;line-height:20px;height:20px;font-size:6.386px;color:#3a3a3a;font-weight:400;right:4.85px;text-align:right;transform:scaleX(0.8299);transform-origin:right center;">134,440</div>
<div class="t" style="top:395.30px;line-height:20px;height:20px;font-size:6.386px;color:#3a3a3a;font-weight:400;right:4.85px;text-align:right;transform:scaleX(0.8299);transform-origin:right center;">62,583</div>
<div class="t" style="top:341.20px;line-height:20px;height:20px;font-size:6.386px;color:#1e1e1e;font-weight:400;font-style:italic;left:187.00px;transform:scaleX(0.8174);transform-origin:left center;-webkit-text-stroke:0.12px #1e1e1e;">Total active users</div>
<div class="r" style="left:187.2px;top:364.6px;width:6.8px;height:6.8px;background:#79c6bc;border-radius:1px;"></div>
<div class="t" style="top:359.30px;line-height:20px;height:20px;font-size:6.283px;color:#3a3a3a;font-weight:400;left:197.30px;transform:scaleX(0.8420);transform-origin:left center;">New users</div>
<div class="r" style="left:187.2px;top:382.6px;width:6.8px;height:6.8px;background:#1f7f85;border-radius:1px;"></div>
<div class="t" style="top:377.30px;line-height:20px;height:20px;font-size:6.283px;color:#3a3a3a;font-weight:400;left:197.30px;transform:scaleX(0.8420);transform-origin:left center;">Repeat users</div>
<div class="r" style="left:187.2px;top:400.6px;width:6.8px;height:6.8px;background:#0b4747;border-radius:1px;"></div>
<div class="t" style="top:395.30px;line-height:20px;height:20px;font-size:6.283px;color:#3a3a3a;font-weight:400;left:197.30px;transform:scaleX(0.8420);transform-origin:left center;">Return users</div>
<div class="r" style="left:744.7px;top:21.6px;width:5.3px;height:392px;background:#f1f1f1;"></div>
<div class="r" style="left:745.9px;top:27.4px;width:3.2px;height:318.4px;background:#c1c1c1;border-radius:1.5px;"></div>
<svg class="r" style="left:745.5px;top:22.8px" width="4" height="3" viewBox="0 0 4 3"><path d="M0.6 2.4L2 0.6 3.4 2.4z" fill="#8a8a8a"/></svg>

</body></html>
